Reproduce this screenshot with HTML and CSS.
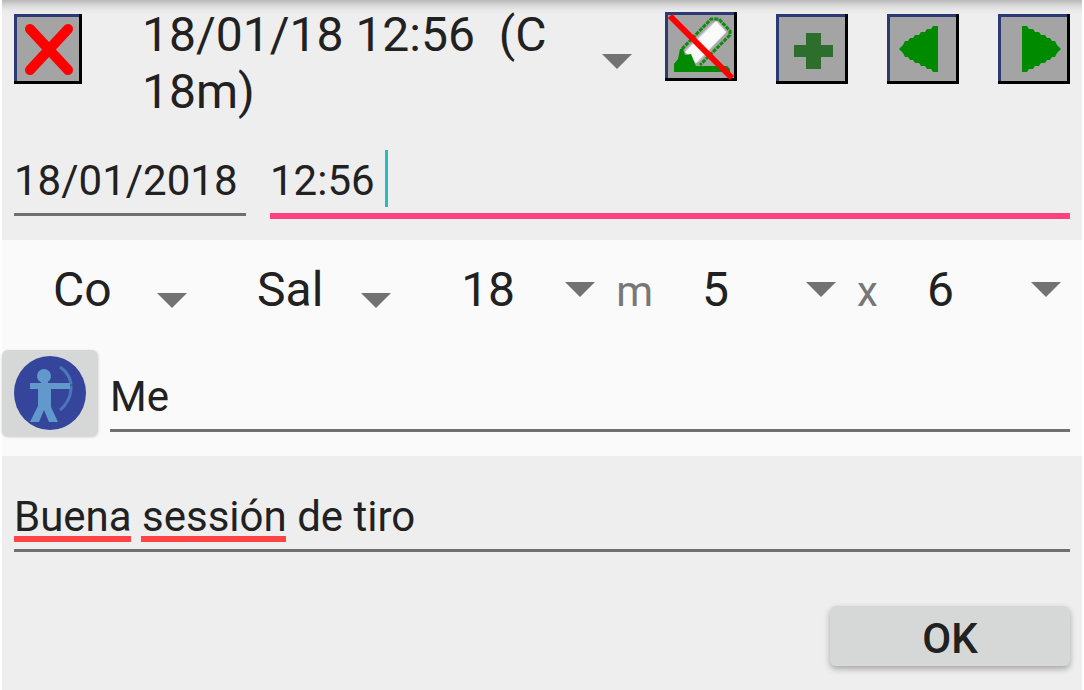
FILE: index.html
```html
<!DOCTYPE html>
<html lang="es">
<head>
    <meta charset="UTF-8">
    <meta name="viewport" content="width=device-width, initial-scale=1.0">
    <title>Session</title>
    <link rel="stylesheet" href="styles.css">
</head>
<body>
    <form class="session">
        <!-- Session selector and toolbar -->
        <header class="panel top-panel">
            <div class="toolbar">
                <button type="button" class="icon-button" aria-label="Delete session">
                    <svg width="68" height="72" viewBox="0 0 68 72">
                        <rect x="0" y="2" width="68" height="70" fill="#a4a4a4"/>
                        <path d="M1.5 70V3.5H67" fill="none" stroke="#2b3974" stroke-width="3"/>
                        <path d="M0 70.5H66.5V2" fill="none" stroke="#000" stroke-width="3"/>
                        <path d="M16 17L54 58M54 17L16 58" stroke="#f00" stroke-width="10" stroke-linecap="round"/>
                    </svg>
                </button>

                <div class="session-picker">
                    <span class="session-name">18/01/18 12:56&nbsp; (C 18m)</span>
                    <select class="session-select" aria-label="Session">
                        <option>18/01/18 12:56 (C 18m)</option>
                    </select>
                </div>

                <div class="actions">
                    <button type="button" class="icon-button" aria-label="Do not erase">
                        <svg width="72" height="72" viewBox="0 0 72 72">
                            <rect width="72" height="69" fill="#a4a4a4"/>
                            <path d="M1.5 68V1.5H71" fill="none" stroke="#2b3974" stroke-width="3"/>
                            <path d="M0 67.5H70.5V0" fill="none" stroke="#000" stroke-width="3"/>
                            <path d="M20 38L47 11L53 9L62 20L34 50L30 52Z" fill="#c4c4c4"/>
                            <path d="M20 40L51 9L61 20L31 51Z" fill="#fafafa"/>
                            <path d="M17 37L46 7H54L65 19V23L35 53" fill="none" stroke="#128a12" stroke-width="3" stroke-dasharray="4 1"/>
                            <path d="M15 37H18L20 43L26 42L31 54H62L65 57V60H9V52L13 47Z" fill="#008a00"/>
                            <path d="M5 4L67 66" stroke="#f00" stroke-width="6"/>
                        </svg>
                    </button>
                    <button type="button" class="icon-button" aria-label="Add session">
                        <svg width="72" height="72" viewBox="0 0 72 72">
                            <rect y="2" width="72" height="70" fill="#a4a4a4"/>
                            <path d="M1.5 70V3.5H71" fill="none" stroke="#2b3974" stroke-width="3"/>
                            <path d="M0 70.5H70.5V2" fill="none" stroke="#000" stroke-width="3"/>
                            <path d="M30 21H45V33H57V45H45V57H30V45H18V33H30Z" fill="#2d6e2d"/>
                        </svg>
                    </button>
                    <button type="button" class="icon-button" aria-label="Previous session">
                        <svg width="72" height="72" viewBox="0 0 72 72">
                            <rect y="2" width="72" height="70" fill="#a4a4a4"/>
                            <path d="M1.5 70V3.5H71" fill="none" stroke="#2b3974" stroke-width="3"/>
                            <path d="M0 70.5H70.5V2" fill="none" stroke="#000" stroke-width="3"/>
                            <path d="M51 14H46L44 17H40L38 20H34L32 23H28L26 26H23L21 29H18L16 33L12 37L16 41L18 45H21L23 48H26L28 51H32L34 54H38L40 57H44L46 60H51Z" fill="#008a00"/>
                        </svg>
                    </button>
                    <button type="button" class="icon-button" aria-label="Next session">
                        <svg width="72" height="72" viewBox="0 0 72 72">
                            <rect y="2" width="72" height="70" fill="#a4a4a4"/>
                            <path d="M1.5 70V3.5H71" fill="none" stroke="#2b3974" stroke-width="3"/>
                            <path d="M0 70.5H70.5V2" fill="none" stroke="#000" stroke-width="3"/>
                            <path d="M24 14H29L31 17H35L37 20H41L43 23H47L49 26H52L54 29H57L59 33L63 37L59 41L57 45H54L52 48H49L47 51H43L41 54H37L35 57H31L29 60H24Z" fill="#008a00"/>
                        </svg>
                    </button>
                </div>
            </div>

            <div class="date-row">
                <input class="field date-field" type="text" value="18/01/2018" aria-label="Date">
                <div class="field-wrap">
                    <input class="field focused" type="text" value="12:56 " aria-label="Time">
                    <span class="cursor"></span>
                </div>
            </div>
        </header>

        <!-- Round details -->
        <section class="panel details-panel">
            <div class="spinners">
                <select class="spinner low-arrow" aria-label="Bow"><option>Co</option></select>
                <select class="spinner low-arrow" aria-label="Place"><option>Sal</option></select>
                <select class="spinner" id="distance" aria-label="Distance"><option>18</option></select>
                <label class="unit" for="distance">m</label>
                <select class="spinner" aria-label="Arrows"><option>5</option></select>
                <label class="unit" for="ends">x</label>
                <select class="spinner" id="ends" aria-label="Ends"><option>6</option></select>
            </div>

            <div class="archer-row">
                <button type="button" class="archer-button" aria-label="Choose archer">
                    <svg width="72" height="76" viewBox="0 0 72 76">
                        <ellipse cx="36" cy="38" rx="36" ry="37" fill="#36459c"/>
                        <path d="M46 12Q58 20 57 34Q56 47 46 55" fill="none" stroke="#4b78b8" stroke-width="3"/>
                        <path d="M46 14L36 31L46 53M56 30H66" fill="none" stroke="#3a4880" stroke-width="1"/>
                        <g fill="#6299cc">
                            <circle cx="30" cy="21" r="7"/>
                            <path d="M27 26H34V28H56V34H37V52L44 67H35L30 55L25 67H16L24 51V34H16V28H27Z"/>
                        </g>
                    </svg>
                </button>
                <input class="field" type="text" value="Me" aria-label="Archer">
            </div>
        </section>

        <!-- Notes -->
        <section class="panel notes-panel">
            <div class="field-wrap">
                <input class="field" type="text" value="Buena sessión de tiro" spellcheck="false" aria-label="Notes">
                <span class="typo typo-first"></span>
                <span class="typo typo-second"></span>
            </div>
            <button type="submit" class="ok-button">OK</button>
        </section>
    </form>
</body>
</html>
```

FILE: styles.css
```css
* {
    margin: 0;
    padding: 0;
    box-sizing: border-box;
}

body {
    font-family: Roboto, sans-serif;
    font-size: 42px;
    color: #212121;
    background-color: #ffffff;
}

input, select, button {
    font: inherit;
    color: inherit;
    border: none;
    border-radius: 0;
    background: none;
    outline: none;
}

button, select {
    cursor: pointer;
}

svg {
    display: block;
}

.session {
    display: flex;
    flex-direction: column;
    min-height: 100vh;
    margin: 0 2px;
}

.panel {
    background-color: #eeeeee;
}

/* Toolbar */
.top-panel {
    padding: 6px 12px 21px;
    background-image: linear-gradient(#b8b8b8, #d6d6d6 5px, #e8e8e8 10px, #eeeeee 15px);
}

.toolbar {
    display: flex;
    align-items: flex-start;
    gap: 11px;
}

.icon-button {
    flex: none;
    margin-top: 6px;
}

.session-picker, .spinner {
    background-image: url("data:image/svg+xml,%3Csvg xmlns='http://www.w3.org/2000/svg' width='30' height='15'%3E%3Cpath d='M0 0H30L15 15Z' fill='%23727272'/%3E%3C/svg%3E");
    background-repeat: no-repeat;
    background-position: right 21px center;
}

.session-picker {
    position: relative;
    flex: 1;
    padding: 0 60px 0 49px;
    background-position: right 22px top 48px;
    font-size: 48px;
    line-height: 57px;
}

.session-name {
    display: block;
}

/* Native list opens from anywhere on the wrapped name */
.session-select {
    position: absolute;
    inset: 0;
    width: 100%;
    opacity: 0;
}

.actions {
    display: flex;
    gap: 39px;
}

/* Text fields */
.field {
    display: block;
    flex: 1;
    width: 100%;
    min-width: 0;
    height: 66px;
    padding-bottom: 2px;
    border-bottom: 3px solid #707070;
}

.field.focused {
    height: 69px;
    border-bottom: 6px solid #ff4081;
}

.field-wrap {
    position: relative;
    flex: 1;
}

.date-row {
    display: flex;
    align-items: flex-start;
    gap: 24px;
    margin-top: 30px;
}

.date-field {
    flex: none;
    width: 232px;
}

.cursor {
    position: absolute;
    top: 0;
    left: 115px;
    width: 3px;
    height: 57px;
    background-color: #26bcc4;
}

/* Round details */
.details-panel {
    padding-bottom: 20px;
    background-color: #fafafa;
}

.spinners {
    display: flex;
    align-items: baseline;
    padding-left: 2px;
}

.spinner {
    appearance: none;
    flex: 1;
    min-width: 0;
    height: 98px;
    padding-left: 49px;
    font-size: 48px;
}

.low-arrow {
    background-position: right 21px top 53px;
}

.unit {
    color: #777777;
}

.archer-row {
    display: flex;
    align-items: flex-end;
    gap: 12px;
    margin-top: 12px;
    padding-right: 12px;
}

.archer-row .field {
    margin-bottom: 4px;
}

.archer-button {
    display: flex;
    align-items: center;
    justify-content: center;
    width: 96px;
    height: 86px;
    border-radius: 6px;
    background-color: #d6d8d7;
    box-shadow: 0 1px 3px rgba(0, 0, 0, 0.2);
}

/* Notes */
.notes-panel {
    display: flex;
    flex: 1;
    flex-direction: column;
    padding: 30px 12px 24px;
}

.notes-panel .field-wrap {
    flex: none;
}

.typo {
    position: absolute;
    top: 50px;
    height: 6px;
    background-color: #ff4444;
}

.typo-first {
    left: 0;
    width: 117px;
}

.typo-second {
    left: 127px;
    width: 145px;
}

.ok-button {
    align-self: flex-end;
    width: 240px;
    height: 60px;
    margin-top: 54px;
    padding-top: 4px;
    border-radius: 6px;
    background-color: #d6d8d7;
    box-shadow: 0 3px 6px rgba(0, 0, 0, 0.3);
    font-weight: 500;
}
```
